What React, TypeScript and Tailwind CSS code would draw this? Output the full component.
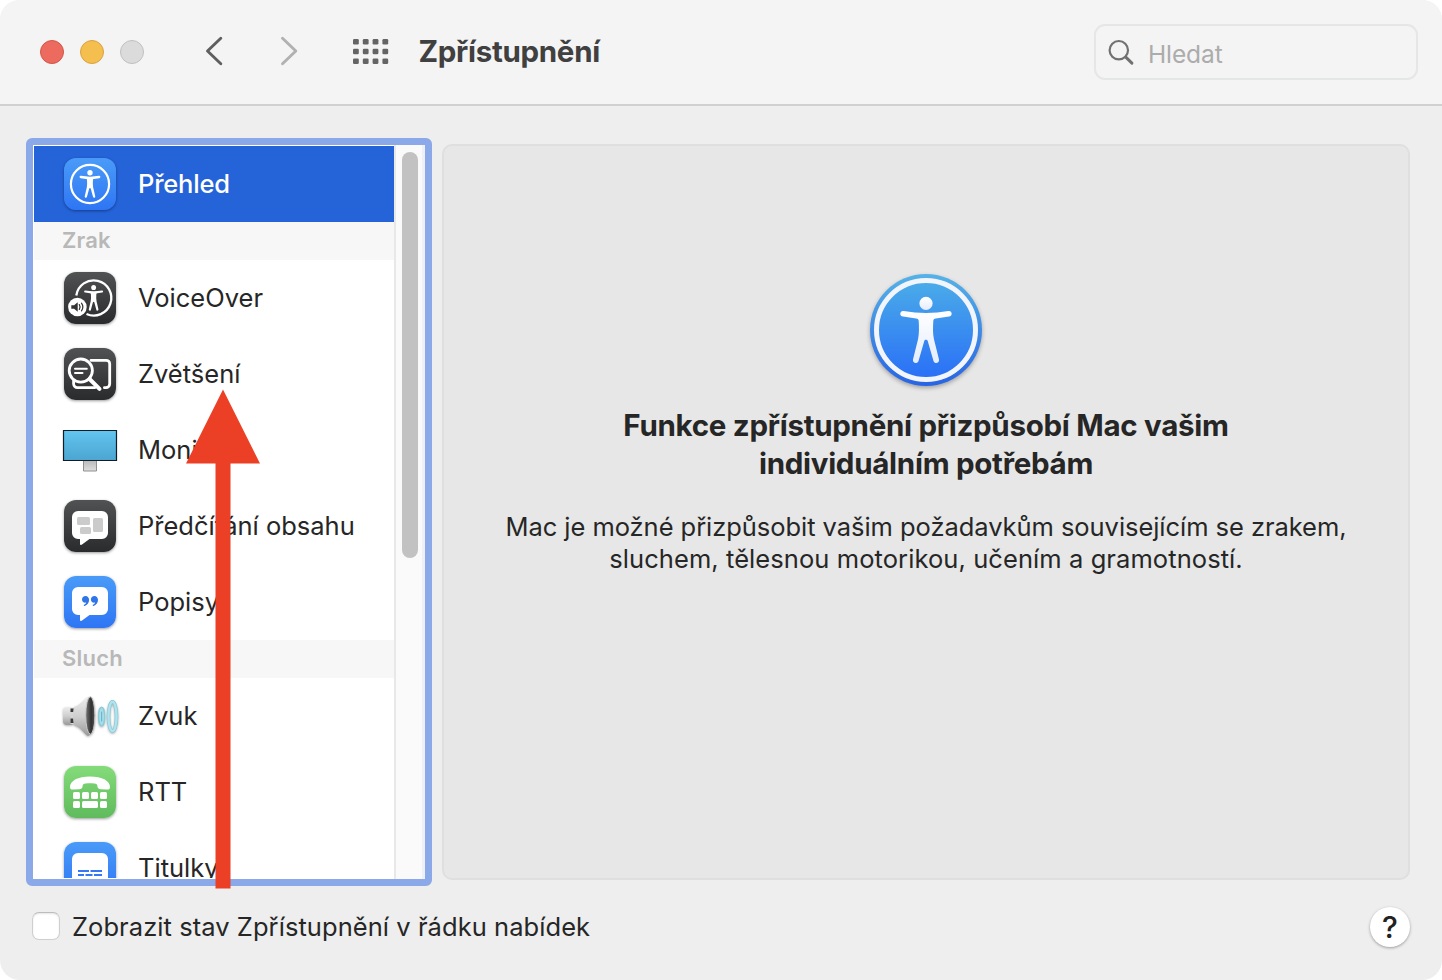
import type { ReactNode } from 'react'

type Item = { label: string; icon: ReactNode; selected?: boolean }
type Section = { title?: string; items: Item[] }

function Person() {
  return (
    <>
      <circle cx="56" cy="29.400" r="6.600" />
      <path d="M33.600 37c-4-.5-4.500 5.100-.6 5.600l13.200 1.900c1.700.2 2.400.9 2.500 2.500.4 6.500.5 12.500-.6 18L43 85.500c-.8 3.700 4.300 5 5.500 1.400l5.700-19.700c.5-1.800 3.100-1.800 3.600 0l5.700 19.700c1.200 3.600 6.300 2.300 5.500-1.400L63.900 65c-1.100-5.500-1-11.500-.6-18 .1-1.600.8-2.300 2.500-2.500L79 42.600c3.900-.5 3.400-6.100-.6-5.600-7.500 1-14.900 2-22.400 2s-14.900-1-22.400-2z" />
    </>
  )
}

function Tile({ tone, children }: { tone: 'blue' | 'dark' | 'green'; children: ReactNode }) {
  const tones = {
    blue: 'from-[#4a9bf8] to-[#2f75f4]',
    dark: 'from-[#515254] to-[#2a2b2c]',
    green: 'from-[#84db7a] to-[#5fbb5c]'
  }
  return (
    <div className={`size-[52px] rounded-[12px] bg-linear-to-b shadow-[0_1px_3px_rgba(0,0,0,0.4)] ${tones[tone]}`}>
      <svg width="52" height="52" viewBox="0 0 52 52" fill="none">
        {children}
      </svg>
    </div>
  )
}

function OverviewIcon() {
  return (
    <Tile tone="blue">
      <circle cx="26" cy="26" r="19.100" stroke="#fff" strokeWidth="2.200" />
      <g fill="#fff" transform="translate(3.300 2.300) scale(.405 .42)">
        <Person />
      </g>
    </Tile>
  )
}

function VoiceOverIcon() {
  return (
    <Tile tone="dark">
      <path d="M12.300 23.500A17.600 17.600 0 1 1 22.500 42" stroke="#fff" strokeWidth="2.300" />
      <g fill="#fff" transform="translate(8.900 4) scale(.37 .39)">
        <Person />
      </g>
      <circle cx="13.400" cy="35" r="9.300" fill="#fff" />
      <path d="M7.300 33.300h2.800l3.600-3.100v9.600l-3.600-3.100H7.300z" fill="#333" />
      <path d="M15.300 32.600c1 1.500 1 3.300 0 4.800M17.500 31.200c1.700 2.400 1.700 5.200 0 7.600" stroke="#333" strokeWidth="1.200" strokeLinecap="round" />
    </Tile>
  )
}

function ZoomIcon() {
  return (
    <Tile tone="dark">
      <path d="M27 12.300h15.200a3.500 3.500 0 0 1 3.500 3.500v19.900a4 4 0 0 1-3.800 4h-1.500M9.600 33v2.800a3.800 3.800 0 0 0 3.800 3.800H31" stroke="#fff" strokeWidth="2.800" strokeLinecap="round" />
      <circle cx="16.800" cy="22.600" r="11.600" stroke="#fff" strokeWidth="2.800" />
      <path d="M11 20.700h11.800M11 25.100h7.500" stroke="#fff" strokeWidth="2" strokeLinecap="round" />
      <path d="M25.500 31l10 9.900" stroke="#fff" strokeWidth="4" strokeLinecap="round" />
    </Tile>
  )
}

function MonitorIcon() {
  return (
    <svg width="56" height="52" viewBox="0 0 56 52" className="-mx-0.5">
      <defs>
        <linearGradient id="screen" x1="0" y1="0" x2="0" y2="1">
          <stop stopColor="#62c5f0" />
          <stop offset="1" stopColor="#4ba5d0" />
        </linearGradient>
        <linearGradient id="stand" x1="0" y1="0" x2="0" y2="1">
          <stop stopColor="#b8b8b8" />
          <stop offset="1" stopColor="#dedede" />
        </linearGradient>
      </defs>
      <path d="M21.500 36h13v11h-13z" fill="url(#stand)" stroke="#909090" />
      <path d="M1.500 6.500h53v30h-53z" fill="url(#screen)" stroke="#111c24" strokeWidth="1.200" />
    </svg>
  )
}

const bubble = 'M14 11h24a6 6 0 0 1 6 6v16a6 6 0 0 1-6 6H25.500L18 44.600c-1 .8-2 .3-2-.9V39h-2a6 6 0 0 1-6-6V17a6 6 0 0 1 6-6z'

function SpeechIcon() {
  return (
    <Tile tone="dark">
      <path d={bubble} fill="#fff" />
      <g fill="#cbcbcb">
        <rect x="13" y="17" width="13" height="8" rx="1.500" />
        <rect x="16" y="27" width="11" height="7" rx="1.500" />
        <rect x="29" y="18" width="10" height="14" rx="1.500" />
      </g>
    </Tile>
  )
}

function CaptionIcon() {
  const mark = 'M21.500 20c2.200 0 3.600 1.700 3.600 4 0 3-2 5.200-4.400 5.900-.9.200-1.300-.8-.5-1.200 1-.6 1.800-1.300 2-2.200-2.500.6-4.200-1-4.200-3.100 0-1.900 1.500-3.400 3.500-3.400z'
  return (
    <Tile tone="blue">
      <path d={bubble} fill="#fff" />
      <path d={mark} fill="#2f75e8" />
      <path d={mark} fill="#2f75e8" transform="translate(8.900 0)" />
    </Tile>
  )
}

function SoundIcon() {
  return (
    <svg width="60" height="52" viewBox="0 0 60 52" fill="none" className="-mx-1 drop-shadow-[0_1px_1px_rgba(0,0,0,0.3)]">
      <defs>
        <linearGradient id="horn" x1="0" y1="0" x2="0" y2="1">
          <stop stopColor="#ededed" />
          <stop offset=".5" stopColor="#cfcfcf" />
          <stop offset="1" stopColor="#999" />
        </linearGradient>
        <linearGradient id="cone" x1="0" y1="0" x2="1" y2="0">
          <stop stopColor="#777" />
          <stop offset=".6" stopColor="#303030" />
          <stop offset="1" stopColor="#555" />
        </linearGradient>
      </defs>
      <rect x="3" y="17" width="11" height="18" rx="4" fill="url(#horn)" />
      <path d="M10.500 18.500h4v15.500h-4z" fill="#d5d5d5" />
      <path d="M10.500 18.500h4v3.500h-4zM10.500 28.500h4v4.500h-4z" fill="#3a3a3a" />
      <path d="M14 17c6-2 9-6 13-9.500 3-2.500 7 5.500 7 18.500s-4 22-7 19.500C23 42 20 37 14 35c-1.300-4-1.300-14 0-18z" fill="url(#horn)" />
      <ellipse cx="30.300" cy="25.500" rx="4.600" ry="18.700" fill="url(#cone)" stroke="#c8c8c8" />
      <ellipse cx="41.600" cy="26.500" rx="3" ry="9.300" fill="#a9dfeb" stroke="#8accd9" strokeWidth="1.400" />
      <path d="M41.600 21.500v10" stroke="#6fb5c8" strokeWidth="1.200" />
      <ellipse cx="52.500" cy="26.500" rx="4" ry="14.700" stroke="#86c8d7" strokeWidth="3.600" />
      <ellipse cx="52.500" cy="26.500" rx="4" ry="14.700" stroke="#b0e3ee" strokeWidth="2.300" />
    </svg>
  )
}

function RttIcon() {
  const keys = [9, 18, 27, 36]
  return (
    <Tile tone="green">
      <g fill="#fff">
        <path d="M6 21c0-6.500 8-10.600 20-10.600S46 14.500 46 21c0 2-1 2.700-3 2.600l-6-.4c-2.600-.2-3.600-1.200-3.600-3.200 0-1.600-1-2.300-3-2.500-3-.3-5.800-.3-8.800 0-2 .2-3 .9-3 2.500 0 2-1 3-3.600 3.200l-6 .4c-2 .1-3-.6-3-2.600z" />
        {keys.map(x => (
          <rect key={x} x={x} y="26" width="7" height="7" rx="1.500" />
        ))}
        <rect x="9" y="35" width="7" height="7" rx="1.500" />
        <rect x="18" y="35" width="16" height="7" rx="1.500" />
        <rect x="36" y="35" width="7" height="7" rx="1.500" />
      </g>
    </Tile>
  )
}

function SubtitlesIcon() {
  return (
    <Tile tone="blue">
      <rect x="8" y="11" width="36" height="30" rx="6" fill="#fff" />
      <path d="M14 29h11m1.500 0h11.500M14 33h6m1.500 0h7m1.500 0h8" stroke="#3478f6" strokeWidth="1.800" />
    </Tile>
  )
}

const sections: Section[] = [
  { items: [{ label: 'Přehled', icon: <OverviewIcon />, selected: true }] },
  {
    title: 'Zrak',
    items: [
      { label: 'VoiceOver', icon: <VoiceOverIcon /> },
      { label: 'Zvětšení', icon: <ZoomIcon /> },
      { label: 'Monitor', icon: <MonitorIcon /> },
      { label: 'Předčítání obsahu', icon: <SpeechIcon /> },
      { label: 'Popisy', icon: <CaptionIcon /> }
    ]
  },
  {
    title: 'Sluch',
    items: [
      { label: 'Zvuk', icon: <SoundIcon /> },
      { label: 'RTT', icon: <RttIcon /> },
      { label: 'Titulky', icon: <SubtitlesIcon /> }
    ]
  }
]

function Toolbar() {
  return (
    <header className="flex h-[106px] shrink-0 items-start border-b-2 border-[#cfd0d0] bg-[#f4f4f4] pl-10 pr-6">
      <div className="mt-10 flex gap-4">
        <span className="size-6 rounded-full border border-[#d35549] bg-[#ec6a5e]" />
        <span className="size-6 rounded-full border border-[#dba23f] bg-[#f5bf4f]" />
        <span className="size-6 rounded-full border border-[#c0c0c0] bg-[#dbdbdb]" />
      </div>
      <svg width="100" height="32" viewBox="0 0 100 32" fill="none" strokeWidth="2.900" strokeLinecap="round" strokeLinejoin="round" className="ml-14 mt-9">
        <path d="M20.800 2.300L7.500 15 20.800 27.700" stroke="#5f5f5f" />
        <path d="M82.500 2.300L95.800 15 82.500 27.700" stroke="#b1b1b1" />
      </svg>
      <svg width="36" height="26" viewBox="0 0 36 26" fill="#646464" className="ml-[53px] mt-[39px]">
        {Array.from({ length: 12 }, (_, i) => (
          <rect key={i} x={(i % 4) * 9.8} y={Math.floor(i / 4) * 9.7} width="5.800" height="5.600" rx="1.300" />
        ))}
      </svg>
      <h1 className="ml-[29.500px] mt-[31px] whitespace-nowrap text-[29.500px] font-bold leading-10 tracking-[-0.3px] text-[#404040]">Zpřístupnění</h1>
      <div className="ml-auto mt-6 flex h-14 w-[324px] items-center rounded-[11px] border-2 border-[#e5e6e6] pl-3">
        <svg width="28" height="28" viewBox="0 0 28 28" fill="none" stroke="#717171" strokeLinecap="round">
          <circle cx="10.800" cy="12.200" r="9.200" strokeWidth="2.200" />
          <path d="M17.800 19.100l6.100 6" strokeWidth="3" />
        </svg>
        <span className="ml-3 mt-[3px] text-[24.500px] leading-8 tracking-[-0.1px] text-[#acacac]">Hledat</span>
      </div>
    </header>
  )
}

function Sidebar() {
  return (
    <nav className="flex h-[748px] w-[406px] overflow-hidden rounded-[6px] border-[7px] border-[#8ba9e8] bg-white pl-px pt-px">
      <div className="h-[732px] w-[360px] overflow-hidden">
        {sections.map((section, i) => (
          <section key={i}>
            {section.title && (
              <h2 className="h-[38px] bg-[#f7f7f7] pl-7 text-[22px] font-semibold leading-[37px] tracking-[0.2px] text-[#b8b8b8]">
                {section.title}
              </h2>
            )}
            {section.items.map(item => (
              <div
                key={item.label}
                className={`flex h-[76px] items-center pl-[30px] ${item.selected ? 'bg-[#2563d9] font-medium tracking-[-0.2px] text-white' : 'text-[#262626]'}`}
              >
                {item.icon}
                <span className="ml-[22px] whitespace-nowrap text-[25.500px]">{item.label}</span>
              </div>
            ))}
          </section>
        ))}
      </div>
      <div className="-mt-px flex-1 border-l-2 border-r-3 border-l-[#e8e8e8] border-r-[#eef0f5] bg-[#fafafa] pl-1.5 pt-[7px]">
        <div className="h-[406px] w-4 rounded-full bg-[#c2c2c2]" />
      </div>
    </nav>
  )
}

function OverviewPanel() {
  return (
    <main className="mt-1.5 flex h-[736px] w-[968px] flex-col items-center rounded-[10px] border-2 border-[#dfdfdf] bg-[#e7e7e7] pt-[126px] text-center text-[#262626]">
      <svg width="116" height="120" viewBox="-2 0 116 120" className="drop-shadow-[0_2px_2px_rgba(0,0,0,0.3)]">
        <defs>
          <linearGradient id="rim" x1="0" y1="0" x2="0" y2="1">
            <stop stopColor="#55b2e7" />
            <stop offset="1" stopColor="#2864e4" />
          </linearGradient>
          <linearGradient id="disc" x1="0" y1="0" x2="0" y2="1">
            <stop stopColor="#4bace8" />
            <stop offset="1" stopColor="#296ff7" />
          </linearGradient>
          <linearGradient id="figure" x1="0" y1="0" x2="0" y2="1">
            <stop stopColor="#fff" />
            <stop offset="1" stopColor="#e5ecfc" />
          </linearGradient>
        </defs>
        <circle cx="56" cy="58" r="56" fill="url(#rim)" />
        <circle cx="56" cy="58" r="49.500" fill="url(#disc)" stroke="#f2f5fb" strokeWidth="5" />
        <g fill="url(#figure)" transform="translate(0 2)">
          <Person />
        </g>
      </svg>
      <h2 className="mt-[14px] whitespace-nowrap text-[29.500px] font-bold leading-[38px] tracking-[-0.28px]">
        Funkce zpřístupnění přizpůsobí Mac vašim
        <br />
        individuálním potřebám
      </h2>
      <p className="mt-[29px] whitespace-nowrap text-[25.500px] leading-8 tracking-[-0.05px]">
        Mac je možné přizpůsobit vašim požadavkům souvisejícím se zrakem,
        <br />
        <span className="tracking-[0.08px]">sluchem, tělesnou motorikou, učením a gramotností.</span>
      </p>
    </main>
  )
}

export default function App() {
  return (
    <div className="h-[980px] w-[1442px] bg-white font-['Inter','Liberation_Sans',sans-serif]">
      <div className="relative flex h-full flex-col overflow-hidden rounded-[20px] bg-[#eeeeee]">
        <Toolbar />
        <div className="flex gap-2.5 pl-[26px] pt-8">
          <Sidebar />
          <OverviewPanel />
        </div>
        <footer className="mt-5 flex items-center pl-8 pr-8">
          <span className="mb-0.5 size-7 rounded-[7px] border border-[#cfcfcf] border-t-[#bcbcbc] bg-white shadow-[inset_0_1px_2px_rgba(0,0,0,0.1)]" />
          <span className="ml-3 mt-0.5 whitespace-nowrap text-[25.500px] tracking-[0.06px] text-[#262626]">
            Zobrazit stav Zpřístupnění v řádku nabídek
          </span>
          <button className="ml-auto mt-px size-10 rounded-full bg-white text-[30px] font-medium leading-10 text-[#222] shadow-[0_1px_3px_rgba(0,0,0,0.35)]">?</button>
        </footer>
        <svg width="76" height="500" viewBox="0 0 76 500" className="absolute left-[185px] top-[389px]">
          <path d="M38 .500L75 74.500H45.500V499.500H30.500V74.500H1z" fill="#eb4026" />
        </svg>
      </div>
    </div>
  )
}
